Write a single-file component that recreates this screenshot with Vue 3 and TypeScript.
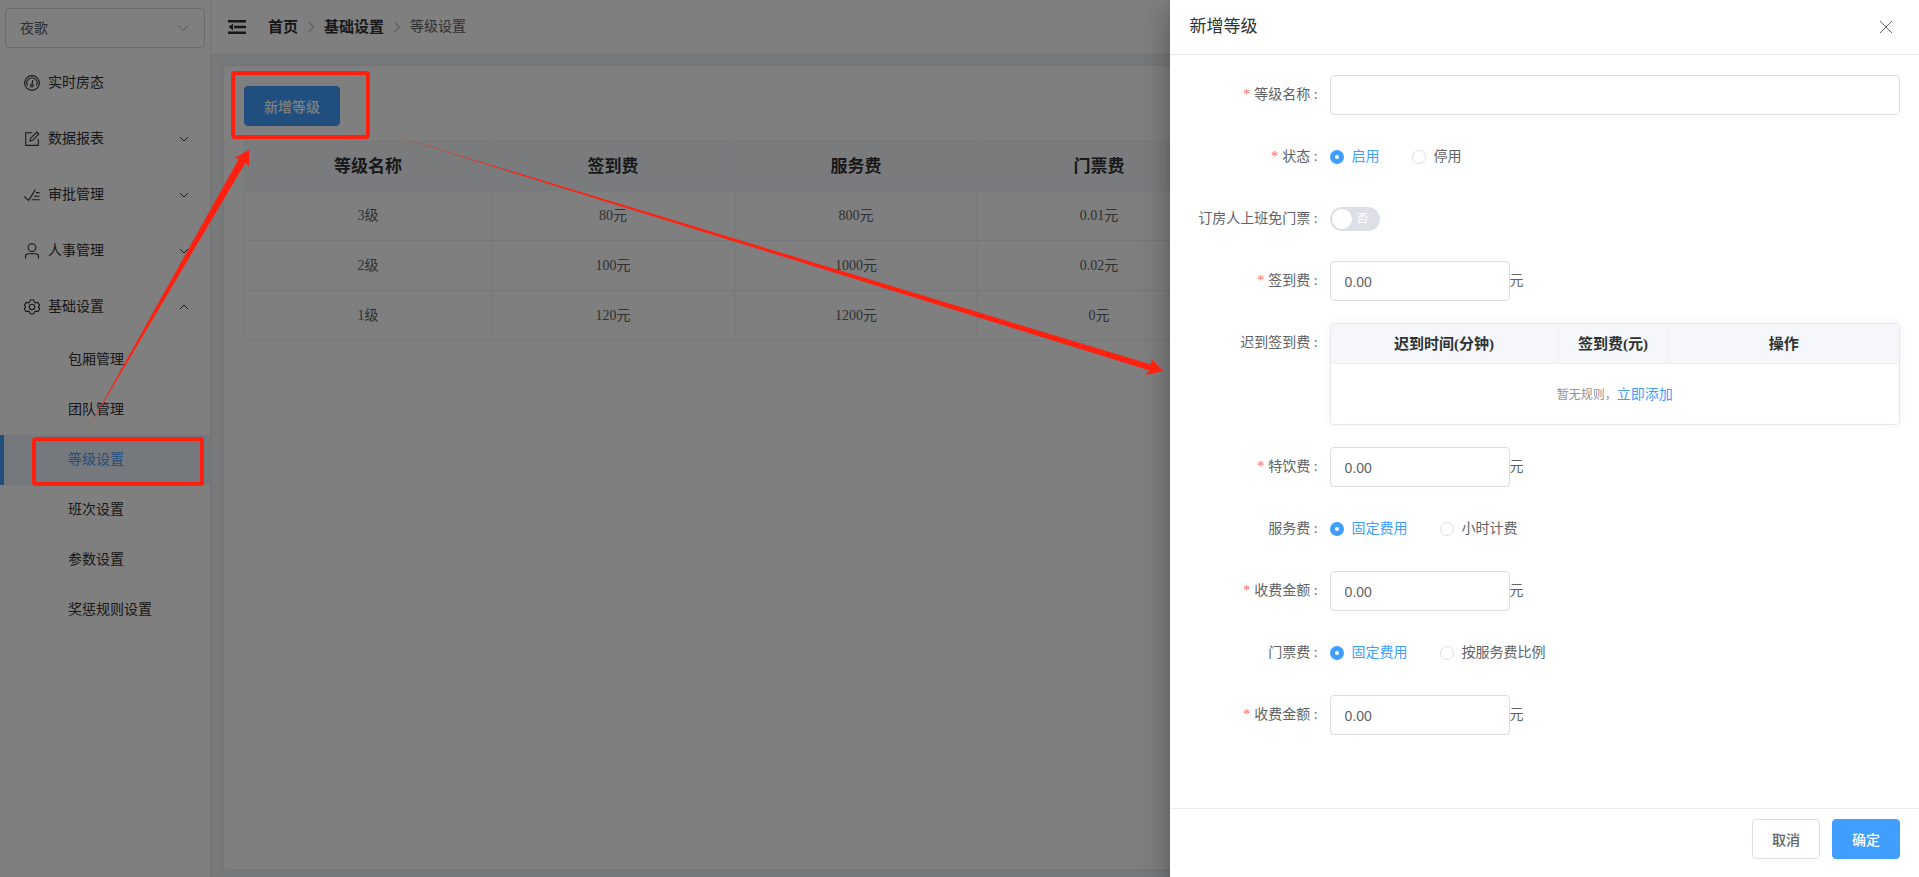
<script setup lang="ts">
import { ref } from 'vue'

interface MenuItem {
  name: string
  icon: string
  arrow?: 'down' | 'up'
}

const menu: MenuItem[] = [
  { name: '实时房态', icon: 'gauge' },
  { name: '数据报表', icon: 'edit', arrow: 'down' },
  { name: '审批管理', icon: 'check', arrow: 'down' },
  { name: '人事管理', icon: 'user', arrow: 'down' },
  { name: '基础设置', icon: 'gear', arrow: 'up' },
]

const submenu: string[] = ['包厢管理', '团队管理', '等级设置', '班次设置', '参数设置', '奖惩规则设置']
const activeItem = ref('等级设置')

const columns: string[] = ['等级名称', '签到费', '服务费', '门票费']
const rows: string[][] = [
  ['3级', '80元', '800元', '0.01元'],
  ['2级', '100元', '1000元', '0.02元'],
  ['1级', '120元', '1200元', '0元'],
]

const shop = ref('夜歌')
const levelName = ref('')
const status = ref('启用')
const freeTicket = ref(false)
const signFee = ref('0.00')
const drinkFee = ref('0.00')
const serviceMode = ref('固定费用')
const serviceFee = ref('0.00')
const ticketMode = ref('固定费用')
const ticketFee = ref('0.00')
</script>

<template>
  <div class="page">
    <aside class="sidebar">
      <div class="shop">
        <select v-model="shop" aria-label="门店">
          <option>夜歌</option>
        </select>
        <svg class="chev" viewBox="0 0 14 14"><path d="M2 4.5l5 5 5-5" /></svg>
      </div>
      <nav>
        <a v-for="item in menu" :key="item.name" href="#" class="menu-item">
          <svg class="icon" viewBox="0 0 16 16">
            <template v-if="item.icon === 'gauge'">
              <circle cx="8" cy="8" r="7.4" />
              <path d="M3.6 10.6A5.1 5.1 0 1 1 12.4 10.6" />
              <path d="M8.8 5L8.1 9" />
              <circle cx="7.9" cy="10.6" r="1.3" />
            </template>
            <template v-else-if="item.icon === 'edit'">
              <path d="M8.2 1.8H1.7v12.6h12.6V7.8" />
              <path d="M6 10l.6-2.8L12.8 1l2 2L8.7 9.3z" />
            </template>
            <template v-else-if="item.icon === 'check'">
              <path d="M.2 9.4L4.6 13.4 11.4 2.6" />
              <path d="M12 5.6h3.6M10.2 9.2h5.4M7.6 12.8h8" />
            </template>
            <template v-else-if="item.icon === 'user'">
              <circle cx="8" cy="4.6" r="3.9" />
              <path d="M1.5 15.5v-1.7a3 3 0 0 1 3-3h7a3 3 0 0 1 3 3v1.7" />
            </template>
            <template v-else>
              <path d="M6.2 1h3.6l.7 2 1.4.8 2.1-.4 1.7 3-1.4 1.6 1.4 1.6-1.7 3-2.1-.4-1.4.8-.7 2H6.2l-.7-2-1.4-.8-2.1.4-1.7-3L1.7 8 .3 6.4l1.7-3 2.1.4L5.5 3z" />
              <circle cx="8" cy="8" r="2.7" />
            </template>
          </svg>
          <span class="menu-name">{{ item.name }}</span>
          <svg v-if="item.arrow" class="fold" :class="item.arrow" viewBox="0 0 12 12"><path d="M2 4l4 4 4-4" /></svg>
        </a>
        <a
          v-for="name in submenu"
          :key="name"
          href="#"
          class="sub-item"
          :class="{ active: name === activeItem }"
          @click.prevent="activeItem = name"
        >{{ name }}</a>
      </nav>
    </aside>

    <div class="main">
      <header class="topbar">
        <button class="collapse" aria-label="折叠菜单">
          <svg viewBox="0 0 18 14">
            <path d="M0 0h18v2.4H0zM6 5.8H18v2.400H6zM0 11.600h18V14H0zM5 3.800v6.400L.5 7z" />
          </svg>
        </button>
        <nav class="crumbs">
          <a href="#">首页</a>
          <svg viewBox="0 0 14 14"><path d="M4.5 2l5 5-5 5" /></svg>
          <a href="#">基础设置</a>
          <svg viewBox="0 0 14 14"><path d="M4.5 2l5 5-5 5" /></svg>
          <span>等级设置</span>
        </nav>
      </header>
      <main class="content">
        <section class="card">
          <button class="btn primary add">新增等级</button>
          <table class="levels">
            <colgroup>
              <col class="first" />
              <col v-for="n in 3" :key="n" class="fee" />
              <col />
            </colgroup>
            <thead>
              <tr>
                <th v-for="c in columns" :key="c">{{ c }}</th>
                <th></th>
              </tr>
            </thead>
            <tbody>
              <tr v-for="row in rows" :key="row[0]">
                <td v-for="cell in row" :key="cell">{{ cell }}</td>
                <td></td>
              </tr>
            </tbody>
          </table>
        </section>
      </main>
    </div>

    <div class="mask"></div>

    <section class="drawer" role="dialog" aria-labelledby="drawer-title">
      <header class="drawer-head">
        <h2 id="drawer-title">新增等级</h2>
        <button class="close" aria-label="关闭">
          <svg viewBox="0 0 14 14"><path d="M1 1l12 12M13 1L1 13" /></svg>
        </button>
      </header>

      <form class="form" @submit.prevent>
        <div class="row">
          <label class="label required" for="level-name">等级名称 :</label>
          <input id="level-name" v-model="levelName" class="text wide" type="text" />
        </div>
        <div class="row" role="radiogroup" aria-labelledby="status-label">
          <span id="status-label" class="label required">状态 :</span>
          <label v-for="o in ['启用', '停用']" :key="o" class="radio">
            <input v-model="status" type="radio" name="status" :value="o" /><span>{{ o }}</span>
          </label>
        </div>
        <div class="row">
          <label class="label" for="free-ticket">订房人上班免门票 :</label>
          <span class="switch">
            <input id="free-ticket" v-model="freeTicket" type="checkbox" role="switch" />
            <span class="switch-text">否</span>
          </span>
        </div>
        <div class="row">
          <label class="label required" for="sign-fee">签到费 :</label>
          <input id="sign-fee" v-model="signFee" class="text" type="text" /><span class="unit">元</span>
        </div>
        <div class="row top">
          <span class="label">迟到签到费 :</span>
          <div class="late">
            <table>
              <colgroup>
                <col class="late-time" />
                <col class="late-fee" />
                <col />
              </colgroup>
              <thead>
                <tr>
                  <th>迟到时间(分钟)</th>
                  <th>签到费(元)</th>
                  <th>操作</th>
                </tr>
              </thead>
              <tbody>
                <tr>
                  <td colspan="3"><span class="empty">暂无规则，<a href="#">立即添加</a></span></td>
                </tr>
              </tbody>
            </table>
          </div>
        </div>
        <div class="row">
          <label class="label required" for="drink-fee">特饮费 :</label>
          <input id="drink-fee" v-model="drinkFee" class="text" type="text" /><span class="unit">元</span>
        </div>
        <div class="row" role="radiogroup" aria-labelledby="service-label">
          <span id="service-label" class="label">服务费 :</span>
          <label v-for="o in ['固定费用', '小时计费']" :key="o" class="radio">
            <input v-model="serviceMode" type="radio" name="service" :value="o" /><span>{{ o }}</span>
          </label>
        </div>
        <div class="row">
          <label class="label required" for="service-fee">收费金额 :</label>
          <input id="service-fee" v-model="serviceFee" class="text" type="text" /><span class="unit">元</span>
        </div>
        <div class="row" role="radiogroup" aria-labelledby="ticket-label">
          <span id="ticket-label" class="label">门票费 :</span>
          <label v-for="o in ['固定费用', '按服务费比例']" :key="o" class="radio">
            <input v-model="ticketMode" type="radio" name="ticket" :value="o" /><span>{{ o }}</span>
          </label>
        </div>
        <div class="row">
          <label class="label required" for="ticket-fee">收费金额 :</label>
          <input id="ticket-fee" v-model="ticketFee" class="text" type="text" /><span class="unit">元</span>
        </div>
      </form>

      <footer class="drawer-foot">
        <button class="btn">取消</button>
        <button class="btn primary">确定</button>
      </footer>
    </section>

    <svg class="marks" viewBox="0 0 1200 520" aria-hidden="true">
      <rect x="233" y="73" width="135" height="64" rx="2" />
      <rect x="34" y="439" width="168" height="45" rx="2" />
      <path d="M89 427L239 158.5 234 158 249 150 249 166.5 245.5 162.5z" />
      <path d="M382 132L1151 364.5 1151.5 359 1163 371 1146 375 1149.5 370.5z" />
    </svg>
  </div>
</template>

<style>
html,
body,
#app {
  height: 100%;
}
body {
  margin: 0;
  overflow: hidden;
}
</style>

<style scoped>
.page {
  position: relative;
  display: flex;
  height: 100%;
  overflow: hidden;
  box-sizing: border-box;
  font-family: "Liberation Serif", "Noto Sans CJK SC", serif;
  font-size: 14px;
  line-height: 22px;
  color: #303133;
  background: #fff;
}
.page *,
.page *::before {
  box-sizing: border-box;
}
a {
  color: inherit;
  text-decoration: none;
}
button,
input,
select {
  margin: 0;
  font-family: inherit;
  font-size: 14px;
}
svg {
  flex: none;
  fill: none;
  stroke: currentColor;
}

/* sidebar */
.sidebar {
  flex: none;
  width: 211px;
  border-right: 1px solid #e6e6e6;
}
.shop {
  position: relative;
  margin: 8px 5px 7px;
}
.shop select {
  display: block;
  width: 100%;
  height: 40px;
  padding: 0 14px;
  appearance: none;
  color: #606266;
  background: #fff;
  border: 1px solid #d4d7de;
  border-radius: 4px;
}
.shop .chev {
  position: absolute;
  top: 13px;
  right: 15px;
  width: 14px;
  height: 14px;
  color: #a8abb2;
}
.menu-item {
  display: flex;
  align-items: center;
  height: 56px;
  padding: 0 20px 0 24px;
}
.icon {
  width: 16px;
  height: 16px;
  margin-right: 8px;
  stroke-width: 1.1;
}
.menu-name {
  flex: 1;
}
.fold {
  width: 12px;
  height: 12px;
}
.fold.up {
  transform: rotate(180deg);
}
.sub-item {
  display: flex;
  align-items: center;
  height: 50px;
  padding-left: 64px;
  border-left: 4px solid transparent;
}
.sub-item.active {
  color: #409eff;
  background: #ebf1fb;
  border-left-color: #409eff;
}

/* main area */
.main {
  display: flex;
  flex: 1;
  flex-direction: column;
  min-width: 0;
}
.topbar {
  display: flex;
  align-items: center;
  height: 55px;
  padding: 0 17px;
  border-bottom: 1px solid #e4e7ed;
}
.collapse {
  display: flex;
  padding: 0;
  margin-right: 22px;
  background: none;
  border: 0;
}
.collapse svg {
  width: 18px;
  height: 14px;
  fill: #303133;
  stroke: none;
}
.crumbs {
  display: flex;
  align-items: center;
  color: #606266;
}
.crumbs a {
  font-size: 15px;
  font-weight: 700;
  color: #303133;
}
.crumbs svg {
  width: 14px;
  height: 14px;
  margin: 0 6px;
  color: #c0c4cc;
  stroke-width: 1.3;
}
.content {
  display: flex;
  flex: 1;
  padding: 11px 13px 8px;
  background: #f0f2f5;
}
.card {
  flex: 1;
  min-width: 0;
  padding: 20px;
  background: #fff;
  border-radius: 4px;
  box-shadow: 0 0 6px rgba(0, 0, 0, 0.08);
}
.btn {
  height: 40px;
  padding: 0 19px;
  font-weight: 500;
  color: #606266;
  background: #fff;
  border: 1px solid #dcdfe6;
  border-radius: 4px;
}
.btn.primary {
  color: #fff;
  background: #409eff;
  border-color: #409eff;
}
.btn.add {
  display: block;
  margin-bottom: 15px;
}
table {
  width: 100%;
  table-layout: fixed;
  border-spacing: 0;
  border-collapse: separate;
}
.levels {
  border-top: 1px solid #ebeef5;
  border-left: 1px solid #ebeef5;
}
.levels .first {
  width: 247px;
}
.levels .fee {
  width: 243px;
}
.levels th,
.levels td {
  height: 50px;
  padding: 1px 0 0;
  text-align: center;
  color: #606266;
  border-right: 1px solid #ebeef5;
  border-bottom: 1px solid #ebeef5;
}
.levels th {
  height: 49px;
  font-size: 17px;
  color: #303133;
  background: #f5f7fa;
}

.mask {
  position: absolute;
  inset: 0;
  background: rgba(0, 0, 0, 0.5);
}

/* drawer */
.drawer {
  position: absolute;
  top: 0;
  right: 0;
  bottom: 0;
  display: flex;
  flex-direction: column;
  width: calc(39% + 1px);
  color: #606266;
  background: #fff;
  box-shadow: 0 8px 10px -5px rgba(0, 0, 0, 0.2), 0 16px 24px 2px rgba(0, 0, 0, 0.14),
    0 6px 30px 5px rgba(0, 0, 0, 0.12);
}
.drawer-head {
  display: flex;
  align-items: center;
  justify-content: space-between;
  height: 55px;
  padding: 0 26px 0 20px;
  border-bottom: 1px solid #e8eaf0;
}
.drawer-head h2 {
  margin: 0;
  font-size: 17px;
  font-weight: 400;
  color: #303133;
}
.close {
  display: flex;
  padding: 0;
  color: #606266;
  background: none;
  border: 0;
}
.close svg {
  width: 14px;
  height: 14px;
}
.form {
  display: flex;
  flex: 1;
  flex-direction: column;
  gap: 22px;
  padding: 20px 19px 0 0;
}
.row {
  display: flex;
  align-items: center;
  min-height: 40px;
}
.row.top {
  align-items: flex-start;
}
.label {
  flex: none;
  width: 160px;
  padding-right: 12px;
  line-height: 40px;
  text-align: right;
}
.required::before {
  margin-right: 4px;
  color: #f56c6c;
  content: "*";
}
.text {
  width: 180px;
  height: 40px;
  padding: 1px 14px 0;
  font-family: "Liberation Sans", "Noto Sans CJK SC", sans-serif;
  color: #606266;
  background: #fff;
  border: 1px solid #dcdfe6;
  border-radius: 4px;
}
.text.wide {
  flex: 1;
}
.radio {
  display: flex;
  align-items: center;
  margin-right: 32px;
}
.radio input {
  width: 14px;
  height: 14px;
  margin-right: 8px;
  appearance: none;
  background: #fff;
  border: 1px solid #dcdfe6;
  border-radius: 50%;
}
.radio input:checked {
  border: 5px solid #409eff;
}
.radio input:checked + span {
  color: #409eff;
}
.switch {
  position: relative;
  display: flex;
}
.switch input {
  width: 50px;
  height: 24px;
  appearance: none;
  background: #dcdfe6;
  border-radius: 12px;
}
.switch input::before {
  display: block;
  width: 20px;
  height: 20px;
  margin: 2px;
  content: "";
  background: #fff;
  border-radius: 50%;
}
.switch-text {
  position: absolute;
  top: 1px;
  right: 11px;
  font-size: 12px;
  color: #fff;
  pointer-events: none;
}
.late {
  flex: 1;
  overflow: hidden;
  border: 1px solid #e4e7ed;
  border-radius: 4px;
  box-shadow: 0 0 10px rgba(0, 0, 0, 0.06);
}
.late-time {
  width: 227px;
}
.late-fee {
  width: 110px;
}
.late th {
  height: 40px;
  padding: 0;
  font-size: 15px;
  color: #303133;
  background: #f5f7fa;
  border-bottom: 1px solid #ebeef5;
}
.late th + th {
  border-left: 1px solid #ebeef5;
}
.late td {
  height: 60px;
  padding: 1px 0 0;
}
.empty {
  display: flex;
  align-items: center;
  justify-content: center;
  font-size: 12px;
  color: #909399;
}
.empty a {
  font-size: 14px;
  color: #409eff;
}
.drawer-foot {
  display: flex;
  gap: 12px;
  justify-content: flex-end;
  padding: 10px 19px 18px;
  border-top: 1px solid #e8eaf0;
}

/* annotation layer */
.marks {
  position: absolute;
  top: 0;
  left: 0;
  width: 1200px;
  height: 520px;
  pointer-events: none;
}
.marks rect {
  stroke: #ff2010;
  stroke-width: 4;
}
.marks path {
  fill: #ff2010;
  stroke: none;
}
</style>
